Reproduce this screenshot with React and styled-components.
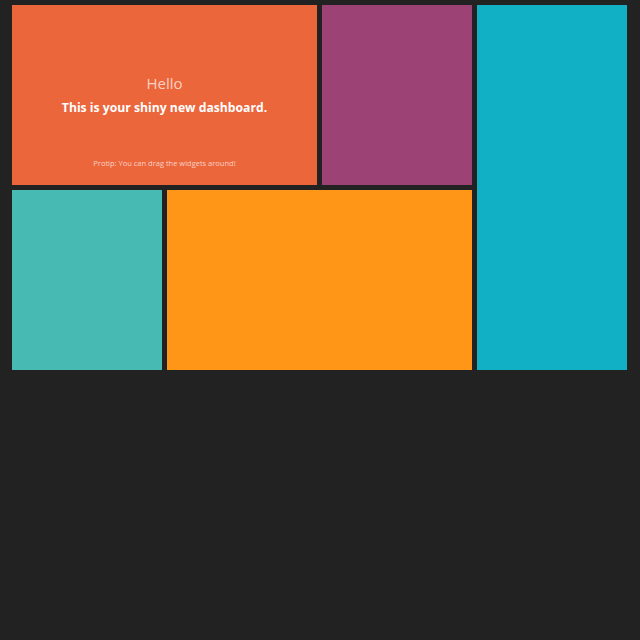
import styled, { createGlobalStyle } from "styled-components";

const GlobalStyle = createGlobalStyle`
  html, body {
    margin: 0;
    padding: 0;
    background: #222222;
    font-family: "Open Sans", "Liberation Sans", sans-serif;
  }
`;

const Page = styled.div`
  width: 640px;
  height: 640px;
  padding: 5px 0 0 12px;
  box-sizing: border-box;
`;

const Grid = styled.div`
  display: grid;
  grid-template-columns: repeat(4, 150px);
  grid-template-rows: repeat(2, 180px);
  gap: 5px;
`;

const Tile = styled.div`
  background: ${(p) => p.color};
  grid-column: ${(p) => p.col || "auto"};
  grid-row: ${(p) => p.row || "auto"};
  display: flex;
  flex-direction: column;
  align-items: center;
  color: #ffffff;
  text-align: center;
`;

const Title = styled.h1`
  margin: 69px 0 0;
  font-size: 15px;
  font-weight: 400;
  line-height: 18px;
  color: rgba(255, 255, 255, 0.7);
`;

const Text = styled.h3`
  margin: 8px 0 0;
  font-size: 12.2px;
  font-weight: 700;
  line-height: 16px;
`;

const Protip = styled.p`
  margin: 41px 0 0;
  font-size: 7.5px;
  line-height: 12px;
  color: rgba(255, 255, 255, 0.7);
`;

export default function App() {
  return (
    <Page>
      <GlobalStyle />
      <Grid>
        <Tile color="#ec663c" col="1 / span 2" row="1">
          <Title>Hello</Title>
          <Text>This is your shiny new dashboard.</Text>
          <Protip>Protip: You can drag the widgets around!</Protip>
        </Tile>
        <Tile color="#9c4274" col="3" row="1" />
        <Tile color="#12b0c5" col="4" row="1 / span 2" />
        <Tile color="#47bbb3" col="1" row="2" />
        <Tile color="#ff9618" col="2 / span 2" row="2" />
      </Grid>
    </Page>
  );
}
